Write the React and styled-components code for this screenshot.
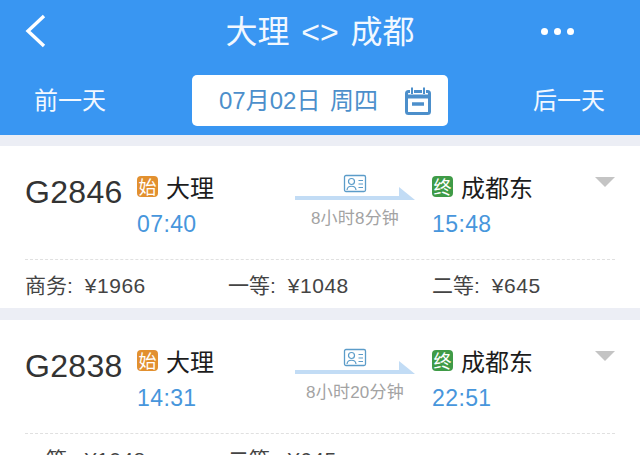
import React from 'react'
import styled, { createGlobalStyle } from 'styled-components'

const GlobalStyle = createGlobalStyle`
    html, body {
        margin: 0;
        padding: 0;
        background: #eceef5;
    }
    body {
        font-family: "Liberation Sans", "Noto Sans CJK SC", sans-serif;
    }
`

const trains = [
    {
        no: 'G2846', from: '大理', depart: '07:40', to: '成都东', arrive: '15:48', duration: '8小时8分钟',
        prices: [['商务', '1966'], ['一等', '1048'], ['二等', '645']],
    },
    {
        no: 'G2838', from: '大理', depart: '14:31', to: '成都东', arrive: '22:51', duration: '8小时20分钟',
        prices: [['一等', '1048'], ['二等', '645']],
    },
]

function App() {
    return (
        <Page>
            <GlobalStyle />
            <Header>
                <TopBar>
                    <BackIcon width="22" height="34" viewBox="0 0 22 34" fill="none">
                        <path d="M20 2 L4 17 L20 32" stroke="#fff" strokeWidth="3.4" />
                    </BackIcon>
                    <Title>大理 &lt;&gt; 成都</Title>
                    <Dots><Dot /><Dot /><Dot /></Dots>
                </TopBar>
                <DateBar>
                    <DayLink>前一天</DayLink>
                    <DateBox>
                        <DateText>07月02日 周四</DateText>
                        <svg width="28" height="28" viewBox="0 0 28 28" fill="none">
                            <rect x="2.5" y="4.5" width="23" height="22" rx="2" stroke="#4c8fcb" strokeWidth="3" />
                            <path d="M2 9.5 H26" stroke="#4c8fcb" strokeWidth="4" />
                            <path d="M8 0.5 V7 M20 0.5 V7" stroke="#fff" strokeWidth="4" />
                            <path d="M8 0.5 V7 M20 0.5 V7" stroke="#4c8fcb" strokeWidth="2" />
                            <path d="M8 17 H20" stroke="#4c8fcb" strokeWidth="3.5" />
                        </svg>
                    </DateBox>
                    <DayLink>后一天</DayLink>
                </DateBar>
            </Header>
            {trains.map((t) => (
                <Card key={t.no}>
                    <Main>
                        <TrainNo>{t.no}</TrainNo>
                        <Station>
                            <NameRow>
                                <Badge $color="#e2902f">始</Badge>
                                <Name>{t.from}</Name>
                            </NameRow>
                            <Time>{t.depart}</Time>
                        </Station>
                        <Route>
                            <svg width="24" height="19" viewBox="0 0 24 19" fill="none">
                                <rect x="1.5" y="1.5" width="21" height="16" rx="1.5" stroke="#5b9cc9" strokeWidth="1.3" />
                                <circle cx="8.5" cy="7.5" r="3" stroke="#5b9cc9" strokeWidth="1.2" />
                                <path d="M4 16 C4.5 11 12.5 11 13 16 M15.5 6.5 H20 M15.5 10 H20 M15.5 13.5 H20" stroke="#5b9cc9" strokeWidth="1.2" />
                            </svg>
                            <Arrow viewBox="0 0 120 16" width="120" height="16">
                                <path d="M0 9 H104 V0 L120 13 H0 Z" fill="#c2dcf5" />
                            </Arrow>
                            <Duration>{t.duration}</Duration>
                        </Route>
                        <Station>
                            <NameRow>
                                <Badge $color="#3f9b47">终</Badge>
                                <Name>{t.to}</Name>
                            </NameRow>
                            <Time>{t.arrive}</Time>
                        </Station>
                        <Caret />
                    </Main>
                    <Prices>
                        {t.prices.map(([seat, price]) => (
                            <Price key={seat}>{seat}:<Fare>¥{price}</Fare></Price>
                        ))}
                    </Prices>
                </Card>
            ))}
        </Page>
    )
}

export default App

const Page = styled.div`
    width: 640px;
    height: 455px;
    overflow: hidden;
    background: #eceef5;
`
const Header = styled.header`
    height: 135px;
    margin-bottom: 11px;
    background: #3996f2;
    color: #fff;
`
const TopBar = styled.div`
    height: 62px;
    display: grid;
    grid-template-columns: 1fr auto 1fr;
    align-items: center;
`
const BackIcon = styled.svg`
    margin-left: 24px;
`
const Title = styled.h1`
    margin: 0;
    padding-top: 2px;
    font-size: 32px;
    line-height: 60px;
    font-weight: 400;
    word-spacing: 3px;
    color: #f2f8ff;
`
const Dots = styled.div`
    justify-self: end;
    margin-right: 66px;
    display: flex;
    gap: 6px;
`
const Dot = styled.span`
    width: 7px;
    height: 7px;
    border-radius: 50%;
    background: #fff;
`
const DateBar = styled.div`
    margin-top: 13px;
    padding-left: 34px;
    display: flex;
    align-items: center;
`
const DayLink = styled.span`
    padding-bottom: 4px;
    font-size: 24px;
    color: #f2f8ff;
`
const DateBox = styled.div`
    width: 256px;
    height: 51px;
    margin: 0 85px 0 86px;
    padding: 0 16px 0 27px;
    box-sizing: border-box;
    display: flex;
    align-items: center;
    justify-content: space-between;
    border-radius: 5px;
    background: #fff;
`
const DateText = styled.span`
    padding-bottom: 4px;
    font-size: 24px;
    word-spacing: 3px;
    color: #4c8fcb;
`
const Card = styled.section`
    height: 162px;
    margin-bottom: 13px;
    padding: 0 25px;
    box-sizing: border-box;
    background: #fff;
`
const Main = styled.div`
    position: relative;
    height: 114px;
    padding-top: 24px;
    box-sizing: border-box;
    display: grid;
    grid-template-columns: 112px 158px 137px 1fr;
    border-bottom: 1px dashed #e0e0e0;

    section + section & {
        margin-top: -1px;
    }
`
const TrainNo = styled.div`
    font-size: 32px;
    line-height: 44px;
    letter-spacing: 0.3px;
    color: #333;
`
const Station = styled.div`
    display: flex;
    flex-direction: column;
    gap: 5px;
    margin-top: -1px;
`
const NameRow = styled.div`
    display: flex;
    align-items: center;
    gap: 8px;
    height: 34px;
`
const Badge = styled.span`
    width: 21px;
    height: 21px;
    display: flex;
    align-items: center;
    justify-content: center;
    border-radius: 4px;
    background: ${(p) => p.$color};
    color: #fff;
    font-size: 18px;
`
const Name = styled.span`
    font-size: 24px;
    color: #1c1c1c;
`
const Time = styled.span`
    font-size: 23px;
    line-height: 32px;
    letter-spacing: 0.4px;
    color: #4796dc;
`
const Route = styled.div`
    width: 120px;
    display: flex;
    flex-direction: column;
    align-items: center;
    padding-top: 4px;
`
const Arrow = styled.svg`
    margin-top: -6px;
`
const Duration = styled.span`
    margin-top: 4px;
    font-size: 17px;
    line-height: 24px;
    letter-spacing: 0.2px;
    white-space: nowrap;
    color: #a3a3a3;
`
const Caret = styled.span`
    position: absolute;
    right: 0;
    top: 31px;
    border-style: solid;
    border-width: 10px 10px 0 10px;
    border-color: #c4c4c4 transparent transparent transparent;
`
const Prices = styled.div`
    display: grid;
    grid-template-columns: 203px 204px 1fr;
    padding-top: 11px;
`
const Price = styled.span`
    font-size: 21px;
    line-height: 30px;
    color: #444;
`
const Fare = styled.span`
    margin-left: 12px;
    letter-spacing: 0.5px;
`
